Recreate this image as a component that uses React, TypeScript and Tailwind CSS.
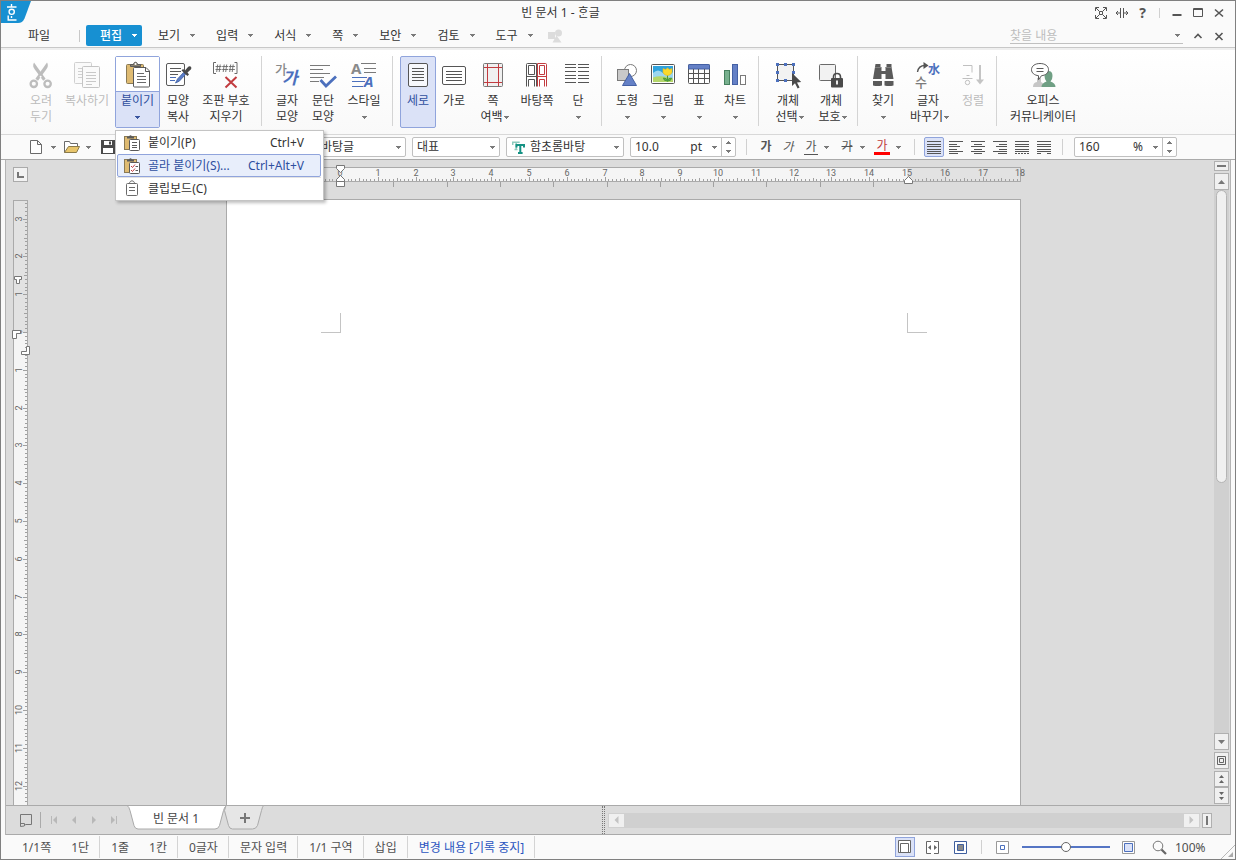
import React from "react";

const CM = 37.8;

function Caret({ className = "fill-[#7a7a7a]" }: { className?: string }) {
  return (
    <svg width="5" height="3" viewBox="0 0 5 3" className={`shrink-0 ${className}`} aria-hidden="true">
      <path d="M0 0h5v1H4v1H3v1H2V2H1V1H0z" shapeRendering="crispEdges" />
    </svg>
  );
}

function Icon({ children }: { children: React.ReactNode }) {
  return (
    <svg width="28" height="28" viewBox="0 0 28 28" fill="none" className="block shrink-0 overflow-visible" aria-hidden="true">
      {children}
    </svg>
  );
}

/* ---------- ribbon drawings ---------- */

const ScissorsIcon = (
  <Icon>
    <g fill="#bdbdbd">
      <path d="M7 1.500c-1.600 3-.6 5 .8 7l8.400 11.300 2.400-2z" />
      <path d="M20 1.500c1.600 3 .6 5-.8 7L11 19.800l-2.600-2z" />
    </g>
    <circle cx="6.800" cy="22.800" r="3.200" stroke="#bdbdbd" strokeWidth="2.300" />
    <circle cx="20.600" cy="22.800" r="3.200" stroke="#bdbdbd" strokeWidth="2.300" />
    <circle cx="13.600" cy="15.800" r="1" fill="#fff" />
  </Icon>
);

const CopyIcon = (
  <Icon>
    <rect x="1.500" y="1.500" width="17" height="21" rx="1" fill="#fafafa" stroke="#d0d0d0" />
    <path d="M5 7.500h6M5 10.500h4M5 13.500h4M5 16.500h4" stroke="#d0d0d0" />
    <rect x="9.500" y="5.500" width="17" height="21" rx="1" fill="#fafafa" stroke="#c4c4c4" />
    <path d="M13 11.500h10M13 14.500h10M13 17.500h10M13 20.500h10M13 23.500h6" stroke="#c8c8c8" />
  </Icon>
);

const PasteIcon = (
  <Icon>
    <rect x="2.500" y="3.500" width="17" height="19" rx="1" fill="#dfbb72" stroke="#8a7a55" />
    <path d="M6.500 5.500v-2h3c0-3 4-3 4 0h3v2z" fill="#8a8270" stroke="#5a5a5a" />
    <circle cx="11.500" cy="3" r="1" fill="#fff" />
    <path d="M9.500 7.500q0-1 1-1h11.500l3.500 3.500v15q0 1-1 1h-14q-1 0-1-1z" fill="#fff" stroke="#5a5a5a" />
    <path d="M21.500 7v3.500h3.500" stroke="#5a5a5a" />
    <path d="M13 12.500h7M13 15.500h9M13 18.500h9M13 21.500h9" stroke="#6a6a6a" />
  </Icon>
);

const ShapeCopyIcon = (
  <Icon>
    <rect x="2.500" y="2.500" width="18" height="22" rx="1.500" fill="#fff" stroke="#5a5a5a" />
    <path d="M6 7.500h11M6 10.500h11M6 13.500h8" stroke="#5a5a5a" />
    <path d="M6 16.500h6M6 19.500h5" stroke="#4a6db8" />
    <path d="M19.500 11.500l-6 6.500-2 4 3.800-1.800 6.200-6.700z" fill="#5a7cc8" stroke="#3f5f9f" strokeWidth=".8" />
    <path d="M17.500 9.500l1.500-1.500 2 1.500 3-3.500c2-2 4.500.5 2.800 2.500l-3.300 3 1.500 2-1.600 1.500z" fill="#4a4a4a" />
  </Icon>
);

const ClearCodeIcon = (
  <Icon>
    <path d="M4 1.500H1.500v11H4M22.500 1.500H25v11h-2.500" stroke="#6a6a6a" />
    <path d="M5.700 3.500l-1 7.500M8.200 3.500l-1 7.500M3.500 5.500h6M3.500 8.500h6M12.200 3.500l-1 7.500M14.700 3.500l-1 7.500M10.200 5.500h6M10.200 8.500h6M18.700 3.500l-1 7.500M21.200 3.500l-1 7.500M16.900 5.500h6M16.900 8.500h6" stroke="#6a6a6a" strokeWidth=".9" />
    <path d="M13.500 16l11 10.500M24.500 16l-11 10.500" stroke="#c23c40" strokeWidth="2" />
  </Icon>
);

const CharShapeIcon = (
  <Icon>
    <text x="2" y="13" fontSize="13" fontWeight="500" fill="#8a8a8a">가</text>
    <text x="9" y="23" fontSize="17" fontWeight="700" fontStyle="italic" fill="#4c70bd">가</text>
  </Icon>
);

const ParaShapeIcon = (
  <Icon>
    <path d="M1 4.500h20M1 8.500h13M1 12.500h20M1 16.500h14M1 20.500h9" stroke="#7a7a7a" />
    <path d="M11.500 19l5.500 6 10-9.500" stroke="#4c70bd" strokeWidth="2.800" />
  </Icon>
);

const StyleIcon = (
  <Icon>
    <text x="1" y="13" fontSize="15" fontWeight="700" fill="#8a8a8a">A</text>
    <path d="M11 2.500h15M14 7.500h12M14 11.500h12" stroke="#7a7a7a" />
    <path d="M2 16.500h15M2 20.500h13M2 25.500h11" stroke="#4c70bd" />
    <text x="14" y="26" fontSize="15" fontWeight="700" fontStyle="italic" fill="#4c70bd">A</text>
  </Icon>
);

const PortraitIcon = (
  <Icon>
    <rect x="4.500" y="2.500" width="19" height="23" rx="1.500" fill="#f7f8fc" stroke="#555" />
    <path d="M8 7.500h12M8 10.500h12M8 13.500h12M8 16.500h12M8 19.500h12" stroke="#555" />
  </Icon>
);

const LandscapeIcon = (
  <Icon>
    <rect x="2.500" y="5.500" width="23" height="18" rx="1.500" fill="#fff" stroke="#555" />
    <path d="M6 10.500h16M6 13.500h16M6 16.500h16M6 19.500h16" stroke="#555" />
  </Icon>
);

const MarginIcon = (
  <Icon>
    <rect x="4.500" y="2.500" width="19" height="23" rx="1" fill="#f0f0f0" stroke="#7a7a7a" />
    <path d="M8.500 3v22M19.500 3v22M5 6.500h18M5 21.500h18" stroke="#c23c40" />
  </Icon>
);

const MasterPageIcon = (
  <Icon>
    <g stroke="#555">
      <path d="M3.500 25.500v-22q0-1 1-1h9v23" fill="#fff" />
      <path d="M5.500 4.500h6v9h-6zM3.500 15.500h10M5.500 25.500v-7h6v7" />
    </g>
    <g stroke="#c23c40">
      <path d="M14.500 25.500v-23h8q1 0 1 1v22" fill="#fff" />
      <path d="M16.500 4.500h5v9h-5zM14.500 15.500h9M16.500 25.500v-7h5v7" />
    </g>
  </Icon>
);

const ColumnsIcon = (
  <Icon>
    <path d="M1 3.500h11M1 6.500h11M1 10.500h11M1 14.500h11M1 17.500h11M1 21.500h11M14 3.500h11M14 6.500h11M14 10.500h11M14 14.500h11M14 17.500h11M14 21.500h11" stroke="#555" />
  </Icon>
);

const ShapesIcon = (
  <Icon>
    <circle cx="17.500" cy="9.500" r="6" fill="#fff" stroke="#7a7a7a" />
    <rect x="4.500" y="8.500" width="11" height="11" fill="#c9c9c9" stroke="#7a7a7a" />
    <path d="M16.500 12.500l7 12h-14z" fill="#6480c6" stroke="#4460a4" />
  </Icon>
);

const PictureIcon = (
  <Icon>
    <rect x="2.500" y="3.500" width="23" height="19" rx="1" fill="#fff" stroke="#555" />
    <rect x="4" y="5" width="20" height="16" fill="#2fa3dd" />
    <path d="M4 12q5-5 10 0t10-1v10H4z" fill="#9bd6ef" />
    <path d="M4 16.500q8-3 20 1V21H4z" fill="#b4d66a" />
    <path d="M18.500 12v8.500M18.500 20q-4 0-4-3 3.500 0 4 3 .5-3 4-3 0 3-4 3" stroke="#4a9a3a" fill="#69b04b" />
    <path d="M14 7.500l2.500 1 2-1.500 2 1.500 2.500-1v4q-1.500 3-4.500 3t-4.500-3z" fill="#fbd92a" stroke="#e9b91c" strokeWidth=".6" />
  </Icon>
);

const TableIcon = (
  <Icon>
    <rect x="3.500" y="3.500" width="21" height="19" rx="1" fill="#fff" stroke="#555" />
    <path d="M3.500 8V4.500q0-1 1-1h19q1 0 1 1V8z" fill="#6480c6" stroke="#4460a4" />
    <path d="M4 12.500h20M4 17.500h20M8.500 8v14M13.500 8v14M19.500 8v14" stroke="#555" />
  </Icon>
);

const ChartIcon = (
  <Icon>
    <rect x="3.500" y="9.500" width="5" height="14" fill="#78b08e" stroke="#46805e" />
    <rect x="11.500" y="3.500" width="5" height="20" fill="#6480c6" stroke="#4460a4" />
    <rect x="19.500" y="14.500" width="5" height="9" fill="#fff" stroke="#7a7a7a" />
  </Icon>
);

const SelectObjectIcon = (
  <Icon>
    <rect x="3.500" y="3.500" width="16" height="16" fill="#f2f2f2" stroke="#555" />
    <path d="M2 2h3v3H2zM10 2h3v3h-3zM18 2h3v3h-3zM2 10h3v3H2zM18 10h3v3h-3zM2 18h3v3H2zM10 18h3v3h-3z" fill="#4c70bd" />
    <path d="M18 12v13l3-2.800 2.600 5.200 2-1-2.600-5 4.200-.4z" fill="#4a4a4a" />
  </Icon>
);

const ProtectObjectIcon = (
  <Icon>
    <rect x="2.500" y="3.500" width="16" height="16" rx="1" fill="#f2f2f2" stroke="#6a6a6a" />
    <path d="M16.500 18v-2q0-3.500 3.500-3.500t3.500 3.500v2" stroke="#4a4a4a" strokeWidth="1.600" />
    <rect x="14" y="17" width="12" height="9.500" rx="1" fill="#4a4a4a" />
    <path d="M20 19.500v4" stroke="#fff" strokeWidth="1.800" />
  </Icon>
);

const BinocularsIcon = (
  <Icon>
    <g fill="#5a5a5a">
      <path d="M6.500 3h5v3h1v4h4V6h1V3h5v3l2 12h-8v-5h-4v5H4l2-12z" />
      <path d="M4 20h9v4.500q-4.500 1-9 0zM15.500 20h9v4.500q-4.500 1-9 0z" />
    </g>
    <path d="M6 6.500h6M16.500 6.500h6" stroke="#8a8a8a" strokeWidth=".8" />
  </Icon>
);

const ReplaceCharIcon = (
  <Icon>
    <text x="1" y="26" fontSize="13" fontWeight="500" fill="#7a7a7a">수</text>
    <text x="14" y="13" fontSize="12" fontWeight="700" fill="#4c70bd">水</text>
    <path d="M3.500 11q1-6.500 7.500-6.500" stroke="#555" strokeWidth="1.400" />
    <path d="M9.500 1l5 3.500-5 3.500z" fill="#555" />
  </Icon>
);

const SortIcon = (
  <Icon>
    <path d="M4 4.500h9v7M7.500 14.500h3M3.500 17.500h10" stroke="#c0c0c0" />
    <circle cx="8.500" cy="21.500" r="2.200" stroke="#c0c0c0" />
    <path d="M21 4v17" stroke="#c4c4c4" strokeWidth="2" />
    <path d="M17 18.500h8l-4 5z" fill="#c4c4c4" />
  </Icon>
);

const CommunicatorIcon = (
  <Icon>
    <path d="M4 26q0-4.500 4-5v-4h4v4q3 1 3 5z" fill="#c6c6c6" />
    <path d="M12.500 26q0-4 5-5.500-2-2-2-5.500 0-5 4-5t4 5q0 3.500-2 5.500 5 1.500 5 5.500z" fill="#6f9f84" />
    <path d="M11 2.500c5 0 8.500 2.500 8.500 6.200 0 3.300-3 5.600-7 6l-3 4v-4c-4-.4-7-2.700-7-6 0-3.700 3.500-6.200 8.500-6.200z" fill="#fff" stroke="#5a5a5a" />
    <path d="M7.500 7.500h7M7.500 10.500h7" stroke="#5a5a5a" />
  </Icon>
);

/* ---------- ribbon ---------- */

type RibbonProps = {
  icon: React.ReactNode;
  lines: string[];
  width: string;
  caret?: "below" | "inline";
  disabled?: boolean;
  active?: boolean;
};

function RibbonButton({ icon, lines, width, caret, disabled, active }: RibbonProps) {
  return (
    <button
      type="button"
      disabled={disabled}
      className={`flex h-[72px] shrink-0 flex-col items-center whitespace-nowrap rounded-xs border pt-1 leading-4 ${width} ${
        active ? "border-[#90a4dc] bg-[#dbe2f7] text-[#2f4f9f]" : "border-transparent"
      } ${disabled ? "text-[#bcbcbc]" : ""}`}
    >
      {icon}
      <span className="mt-1">{lines[0]}</span>
      {lines[1] && (
        <span className={`flex items-center gap-px ${caret === "inline" ? "pl-[3px]" : ""}`}>
          {lines[1]}
          {caret === "inline" && <Caret />}
        </span>
      )}
      {caret === "below" && (
        <span className="flex h-4 items-center">
          <Caret />
        </span>
      )}
    </button>
  );
}

function RibbonDivider() {
  return <div className="ml-[5px] mr-[7px] h-[70px] w-px shrink-0 bg-[#d4d4d4]" />;
}

function MiniPaste({ kind }: { kind: "paste" | "special" | "board" }) {
  return (
    <svg width="18" height="18" viewBox="0 0 18 18" fill="none" aria-hidden="true">
      {kind === "board" ? (
        <g stroke="#6a6a6a">
          <rect x="3.500" y="3.500" width="11" height="12" rx="1" fill="#fff" />
          <path d="M6.500 3.500c0-3.500 5-3.500 5 0" />
          <path d="M6 7.500h6M6 10.500h6" />
        </g>
      ) : (
        <g>
          <rect x="1.500" y="2.500" width="12" height="13" fill="#dfbb72" stroke="#8a7a55" />
          <path d="M4 4.500V2.500h2q1.500-2.500 3 0h2v2z" fill="#5a5a5a" />
          <rect x="6.500" y="5.500" width="10" height="11" rx="1" fill="#fff" stroke="#5a5a5a" />
          {kind === "paste" ? (
            <path d="M9 8.500h5M9 11.500h5M9 13.500h5" stroke="#5a5a5a" />
          ) : (
            <g>
              <path d="M8 9l1.500 1.500L12 7.500M8 13l1.500 1.500 2.500-3" stroke="#c23c40" />
              <path d="M12.500 9.500h2.500M12.500 13.500h2.500" stroke="#5a5a5a" />
            </g>
          )}
        </g>
      )}
    </svg>
  );
}

function PasteMenu() {
  return (
    <div
      role="menu"
      className="absolute -left-px top-[73px] z-10 w-[209px] border border-[#c4c4c4] bg-white p-px pr-0.5 text-[#333] shadow-[2px_2px_3px_rgba(0,0,0,0.25)]"
    >
      <button type="button" role="menuitem" className="flex h-[22px] w-full items-center border border-transparent pl-[5px] pr-4">
        <MiniPaste kind="paste" />
        <span className="ml-[7px] flex-1 text-left">붙이기(P)</span>
        <span>Ctrl+V</span>
      </button>
      <button
        type="button"
        role="menuitem"
        className="flex h-[23px] w-full items-center rounded-xs border border-[#90a4dc] bg-[#e8eefb] pl-[5px] pr-4 text-[#2f4f9f]"
      >
        <MiniPaste kind="special" />
        <span className="ml-[7px] flex-1 text-left">골라 붙이기(S)...</span>
        <span>Ctrl+Alt+V</span>
      </button>
      <div className="h-px bg-[#e4e4e4]" />
      <button type="button" role="menuitem" className="flex h-[21px] w-full items-center border border-transparent pl-[5px] pr-4">
        <MiniPaste kind="board" />
        <span className="ml-[7px] flex-1 text-left">클립보드(C)</span>
      </button>
    </div>
  );
}

function Ribbon() {
  return (
    <div className="flex h-[85px] items-start border-b border-[#d8d8d8] bg-gradient-to-b from-white to-[#f9f9f9] pl-[22px] pt-[6px]">
      <RibbonButton icon={ScissorsIcon} lines={["오려", "두기"]} width="w-9" disabled />
      <RibbonButton icon={CopyIcon} lines={["복사하기"]} width="w-[56px]" disabled />
      <div className="relative flex h-[72px] w-[45px] shrink-0 flex-col rounded-xs border border-[#90a4dc] text-[#2f4f9f]">
        <button type="button" aria-label="붙이기" className="flex h-[34px] justify-center bg-white pl-px pt-1">
          {PasteIcon}
        </button>
        <button type="button" className="flex flex-1 flex-col items-center border-t border-[#90a4dc] bg-[#dbe2f7] pt-px leading-4">
          <span>붙이기</span>
          <span className="flex h-4 items-center">
            <Caret className="fill-[#3a559f]" />
          </span>
        </button>
        <PasteMenu />
      </div>
      <RibbonButton icon={ShapeCopyIcon} lines={["모양", "복사"]} width="w-9" />
      <RibbonButton icon={ClearCodeIcon} lines={["조판 부호", "지우기"]} width="w-[60px]" />
      <RibbonDivider />
      <RibbonButton icon={CharShapeIcon} lines={["글자", "모양"]} width="w-9" />
      <RibbonButton icon={ParaShapeIcon} lines={["문단", "모양"]} width="w-9" />
      <RibbonButton icon={StyleIcon} lines={["스타일"]} width="w-[46px]" caret="below" />
      <RibbonDivider />
      <RibbonButton icon={PortraitIcon} lines={["세로"]} width="w-9" active />
      <RibbonButton icon={LandscapeIcon} lines={["가로"]} width="w-9" />
      <RibbonButton icon={MarginIcon} lines={["쪽", "여백"]} width="w-[42px]" caret="inline" />
      <RibbonButton icon={MasterPageIcon} lines={["바탕쪽"]} width="w-[46px]" />
      <RibbonButton icon={ColumnsIcon} lines={["단"]} width="w-9" caret="below" />
      <RibbonDivider />
      <RibbonButton icon={ShapesIcon} lines={["도형"]} width="w-9" caret="below" />
      <RibbonButton icon={PictureIcon} lines={["그림"]} width="w-9" caret="below" />
      <RibbonButton icon={TableIcon} lines={["표"]} width="w-9" caret="below" />
      <RibbonButton icon={ChartIcon} lines={["차트"]} width="w-9" caret="below" />
      <RibbonDivider />
      <RibbonButton icon={SelectObjectIcon} lines={["개체", "선택"]} width="w-11" caret="inline" />
      <RibbonButton icon={ProtectObjectIcon} lines={["개체", "보호"]} width="w-[42px]" caret="inline" />
      <RibbonDivider />
      <RibbonButton icon={BinocularsIcon} lines={["찾기"]} width="w-9" caret="below" />
      <RibbonButton icon={ReplaceCharIcon} lines={["글자", "바꾸기"]} width="w-[54px]" caret="inline" />
      <RibbonButton icon={SortIcon} lines={["정렬"]} width="w-9" disabled />
      <RibbonDivider />
      <RibbonButton icon={CommunicatorIcon} lines={["오피스", "커뮤니케이터"]} width="w-[78px]" />
    </div>
  );
}

/* ---------- title and menu ---------- */

function ToolGlyph({ label, children }: { label: string; children: React.ReactNode }) {
  return (
    <button type="button" aria-label={label} className="flex h-5 w-[21px] items-center justify-center">
      <svg width="12" height="12" viewBox="0 0 12 12" fill="none" stroke="#555" className="overflow-visible">
        {children}
      </svg>
    </button>
  );
}

function Header() {
  const menus = ["보기", "입력", "서식", "쪽", "보안", "검토", "도구"];
  return (
    <header>
      <div className="flex h-[23px] items-center pr-[6px]">
        <svg width="30" height="23" viewBox="0 0 30 23" className="block shrink-0" aria-hidden="true">
          <path d="M0 0h30l-6.500 17.500Q21.500 22 17 22H0z" fill="#1790d2" />
          <g stroke="#fff" fill="none" strokeWidth="1.400">
            <path d="M10.500 3v3M6 6h9.500M10.500 15v2M7.200 14.500V19H15.500" />
            <circle cx="10.700" cy="10.800" r="2.600" />
          </g>
        </svg>
        <h1 className="flex-1 text-center leading-5">빈 문서 1 - {"\u1112\u119E\u11AB"}글</h1>
        <ToolGlyph label="전체 화면">
          <path d="M.5 4V.5H4M8 .500h3.500V4M11.500 8v3.500H8M4 11.500H.5V8M1 1l3.500 3.500M11 1L7.500 4.500M11 11L7.500 7.500M1 11l3.500-3.500M4.500 4.500h3v3h-3z" />
        </ToolGlyph>
        <ToolGlyph label="창 나누기">
          <path d="M4.500 1v10M7.500 1v10M0 6h4M8 6h4M2 4L0 6l2 2M10 4l2 2-2 2" />
        </ToolGlyph>
        <button type="button" className="w-[21px] text-center text-sm font-bold leading-5 text-[#555]">
          ?
        </button>
        <div className="mx-[6px] h-[10px] w-px bg-[#d0d0d0]" />
        <ToolGlyph label="최소화">
          <path d="M1.500 8h9" strokeWidth="2" />
        </ToolGlyph>
        <ToolGlyph label="최대화">
          <path d="M1.500 1.500h9v8h-9zM1.500 2.500h9" />
        </ToolGlyph>
        <ToolGlyph label="닫기">
          <path d="M2 2.500l8 7M10 2.500l-8 7" strokeWidth="1.600" />
        </ToolGlyph>
      </div>
      <div className="flex h-6 items-center border-b border-[#c8c8c8] pr-[6px]">
        <button type="button" className="w-[78px] pl-[27px] text-left">
          파일
        </button>
        <div className="mr-[6px] h-3 w-px bg-[#c8c8c8]" />
        <button
          type="button"
          className="mr-1 flex h-[21px] w-[56px] items-center gap-[10px] rounded-xs bg-[#1790d2] pl-[14px] font-medium text-white"
        >
          편집
          <Caret className="fill-white" />
        </button>
        {menus.map((m) => (
          <button key={m} type="button" className="flex items-center gap-[10px] pl-3 pr-[9px]">
            {m}
            <Caret />
          </button>
        ))}
        <svg width="16" height="14" viewBox="0 0 16 14" className="ml-[6px]" fill="#dcdcdc" aria-hidden="true">
          <path d="M0 3h7v7H0zM8.500 6.500l5 7h-9z" />
          <circle cx="10.500" cy="4" r="3.500" />
        </svg>
        <div className="flex-1" />
        <label className="mr-1 flex h-[17px] w-[173px] items-center border-b border-[#c0c0c0] pr-[3px]">
          <input
            type="text"
            aria-label="찾을 내용"
            placeholder="찾을 내용"
            className="min-w-0 flex-1 bg-transparent pt-px leading-4 outline-none placeholder:text-[#bdbdbd]"
          />
          <Caret />
        </label>
        <ToolGlyph label="메뉴 접기">
          <path d="M2.500 8L6 4.500 9.500 8" strokeWidth="1.600" />
        </ToolGlyph>
        <ToolGlyph label="문서 닫기">
          <path d="M2.500 3l7 7M9.500 3l-7 7" strokeWidth="1.600" />
        </ToolGlyph>
      </div>
      <div className="h-[2px] bg-[#efefef]" />
    </header>
  );
}

/* ---------- formatting bar ---------- */

function Combo({ label, value, width, icon }: { label: string; value: string; width: string; icon?: React.ReactNode }) {
  return (
    <div className={`mr-[6px] flex h-5 shrink-0 items-center rounded-xs border border-[#c0c0c0] bg-white pr-1 ${width}`}>
      {icon}
      <select aria-label={label} className="min-w-0 flex-1 appearance-none bg-transparent pl-[4px] leading-4 outline-none">
        <option>{value}</option>
      </select>
      <Caret />
    </div>
  );
}

function NumberBox({ label, value, unit, width }: { label: string; value: string; unit: string; width: string }) {
  return (
    <div className={`flex h-5 shrink-0 items-center rounded-xs border border-[#c0c0c0] bg-white ${width}`}>
      <input aria-label={label} defaultValue={value} className="w-8 min-w-0 flex-1 bg-transparent pl-1 leading-4 outline-none" />
      <span className="mr-[10px]">{unit}</span>
      <Caret />
      <div className="ml-1 flex h-full w-[14px] flex-col border-l border-[#c0c0c0]">
        <button type="button" aria-label={`${label} 늘리기`} className="flex flex-1 items-center justify-center">
          <Caret className="rotate-180 fill-[#7a7a7a]" />
        </button>
        <button type="button" aria-label={`${label} 줄이기`} className="flex flex-1 items-center justify-center">
          <Caret />
        </button>
      </div>
    </div>
  );
}

function BarDivider({ className }: { className: string }) {
  return <div className={`h-4 w-px shrink-0 bg-[#d0d0d0] ${className}`} />;
}

const alignments = [
  { label: "양쪽 정렬", d: "M0 .5h14M0 3.500h14M0 5.500h14M0 8.500h14M0 10.500h14M0 12.500h14", active: true },
  { label: "왼쪽 정렬", d: "M0 .5h14M0 3.500h8M0 5.500h11M0 8.500h8M0 10.500h14M0 12.500h9" },
  { label: "가운데 정렬", d: "M0 .5h14M3 3.500h8M0 5.500h14M3 8.500h8M0 10.500h14M3 12.500h8" },
  { label: "오른쪽 정렬", d: "M0 .5h14M6 3.500h8M3 5.500h11M6 8.500h8M0 10.500h14M5 12.500h9" },
  { label: "배분 정렬", d: "M0 .5h14M0 3.500h14M0 5.500h14M0 8.500h14M0 12.500h2M3 12.500h2M6 12.500h2M9 12.500h2M12 12.500h2M0 10.500h14" },
  { label: "나눔 정렬", d: "M0 .5h14M0 3.500h14M0 5.500h14M0 8.500h14M0 10.500h14M0 12.500h4M10 12.500h4" },
];

function FormatBar() {
  return (
    <div className="flex h-[25px] items-center border-b border-[#aaa] pl-7">
      <button type="button" aria-label="새 문서" className="flex w-[27px] items-center justify-between">
        <svg width="14" height="16" viewBox="0 0 14 16" fill="#fff" stroke="#6a6a6a" aria-hidden="true">
          <path d="M1.500 1.500h7l4 4v9h-11zM8.500 1.500v4h4" />
        </svg>
        <Caret />
      </button>
      <button type="button" aria-label="열기" className="ml-2 flex w-[27px] items-center justify-between">
        <svg width="18" height="14" viewBox="0 0 18 14" aria-hidden="true" stroke="#6a6a6a">
          <path d="M.5 12.500v-11h5l1 2h7v3" fill="#fff" />
          <path d="M.5 12.500l4-6h11l-3 6z" fill="#e8c56b" stroke="#8a7a4a" />
        </svg>
        <Caret />
      </button>
      <button type="button" aria-label="저장" className="ml-[10px] w-[14px]">
        <svg width="14" height="14" viewBox="0 0 14 14" aria-hidden="true">
          <path d="M0 0h14v14H0z" fill="#4a4a4a" />
          <path d="M3 1h8v4H3zM2 8h10v5H2z" fill="#fff" />
          <path d="M8 1.500h2v3H8z" fill="#4a4a4a" />
        </svg>
      </button>
      <div className="w-[201px] shrink-0" />
      <Combo label="스타일" value="바탕글" width="w-[90px]" />
      <Combo label="언어" value="대표" width="w-[88px]" />
      <Combo
        label="글꼴"
        value="함초롬바탕"
        width="w-[118px]"
        icon={
          <svg width="14" height="13" viewBox="0 0 14 13" className="ml-[5px] shrink-0" fill="none" aria-hidden="true">
            <path d="M.7 4V1.200h7M4.200 1.200V8.500M2.500 8.500h3" stroke="#8ccbbd" strokeWidth="1.500" />
            <path d="M4.500 6.500V4H12v2.500M8.300 4v8M6 12h4.600" stroke="#159284" strokeWidth="2" />
          </svg>
        }
      />
      <NumberBox label="글자 크기" value="10.0" unit="pt" width="w-[106px]" />
      <BarDivider className="ml-[10px] mr-2" />
      <button type="button" className="w-[22px] text-center font-bold text-[#555]">가</button>
      <button type="button" className="w-[22px] text-center italic text-[#555]">가</button>
      <button type="button" className="flex w-[36px] items-center gap-[6px] pl-[5px] text-[#555]">
        <span className="w-[14px] border-b border-[#555] text-center leading-[14px]">가</span>
        <Caret />
      </button>
      <button type="button" className="flex w-[36px] items-center gap-[6px] pl-[5px] text-[#555]">
        <span className="w-[14px] text-center leading-4 line-through">가</span>
        <Caret />
      </button>
      <button type="button" className="flex w-[36px] items-center gap-[6px] pl-[3px] text-[#c0393b]">
        <span className="w-4 border-b-[3px] border-[#f00] text-center leading-[13px]">가</span>
        <Caret />
      </button>
      <BarDivider className="ml-[7px] mr-[9px]" />
      {alignments.map((a) => (
        <button
          key={a.label}
          type="button"
          aria-label={a.label}
          className={`mr-0.5 flex h-5 w-5 items-center justify-center rounded-xs border ${
            a.active ? "border-[#90a4dc] bg-[#dbe2f7]" : "border-transparent"
          }`}
        >
          <svg width="14" height="12" viewBox="0 0 14 12" stroke="#555" className="shrink-0 overflow-visible" aria-hidden="true">
            <path d={a.d} />
          </svg>
        </button>
      ))}
      <BarDivider className="ml-[6px] mr-[11px]" />
      <NumberBox label="확대 비율" value="160" unit="%" width="w-[103px]" />
    </div>
  );
}

/* ---------- rulers ---------- */

function tickSize(i: number) {
  return i % 10 === 0 ? 4 : i % 5 === 0 ? 3 : 2;
}

function HorizontalRuler() {
  const zero = 114;
  const ticks: string[] = [];
  for (let i = -30; i <= 180; i++) {
    const x = Math.round(zero + (i * CM) / 10) + 0.5;
    if (x < 1 || x > 794) continue;
    ticks.push(`M${x} ${14 - tickSize(i)}V14`);
  }
  const tabs: string[] = [];
  for (let i = 1; i <= 10; i++) tabs.push(`M${Math.round(zero + i * 53.3) + 0.5} 15v5`);
  const nums = Array.from({ length: 19 }, (_, i) => i);
  return (
    <svg width="795" height="32" viewBox="0 0 795 32" fill="none" className="block overflow-visible" aria-hidden="true">
      <rect x=".5" y=".5" width="794" height="14" fill="#e2e2e2" stroke="#aaa" />
      <rect x="114" y="1" width="567" height="13" fill="#f5f5f5" />
      <path d={ticks.join("")} stroke="#a0a0a0" />
      <path d={tabs.join("")} stroke="#a0a0a0" />
      <g className="font-[Roboto,sans-serif]" fontSize="9" fill="#666" textAnchor="middle">
        {nums.map((n) => (
          <text key={n} x={Math.round(zero + n * CM)} y="9">
            {n}
          </text>
        ))}
      </g>
      <g fill="#fff" stroke="#777">
        <path d="M110.500-1.500h8v3l-4 4-4-4zM110.500 14.500v-2l4-4 4 4v2zM110.500 14.500h8v5h-8z" />
        <path d="M678.500 16.500v-3l4-4 4 4v3z" />
      </g>
    </svg>
  );
}

function VerticalRuler() {
  const zero = 132;
  const ticks: string[] = [];
  for (let i = -35; i <= 262; i++) {
    const y = Math.round(zero + (i * CM) / 10) + 0.5;
    if (y < 2) continue;
    ticks.push(`M${14 - tickSize(i)} ${y}H14`);
  }
  const nums = Array.from({ length: 16 }, (_, i) => i - 3);
  return (
    <svg width="15" height="1124" viewBox="0 0 15 1124" fill="none" className="block shrink-0 overflow-visible" aria-hidden="true">
      <rect x=".5" y=".5" width="14" height="1123" fill="#e2e2e2" stroke="#aaa" />
      <rect x="1" y="132" width="13" height="934" fill="#f5f5f5" />
      <path d={ticks.join("")} stroke="#a0a0a0" />
      <g className="font-[Roboto,sans-serif]" fontSize="9" fill="#666" textAnchor="middle">
        {nums.map((n) => (
          <text key={n} transform={`translate(9 ${Math.round(zero + n * CM)}) rotate(-90)`}>
            {Math.abs(n)}
          </text>
        ))}
      </g>
      <g fill="#fff" stroke="#777">
        <path d="M1.500 76.500h7v3h-2v4h-3v-4h-2z" />
        <path d="M-.5 130.500h8v3h-4v5h-4z" />
        <path d="M13.500 146.500h3v8h-8v-3h5z" />
      </g>
    </svg>
  );
}

/* ---------- workspace ---------- */

function ScrollButton({ label, height, children }: { label: string; height: string; children: React.ReactNode }) {
  return (
    <button type="button" aria-label={label} className={`flex w-[15px] shrink-0 items-center justify-center border border-[#b0b0b0] bg-[#f0f0f0] ${height}`}>
      {children}
    </button>
  );
}

function ScrollTriangle({ d }: { d: string }) {
  return (
    <svg width="7" height="4" viewBox="0 0 7 4" fill="#777" className="shrink-0" aria-hidden="true">
      <path d={d} />
    </svg>
  );
}

function Workspace() {
  return (
    <div className="flex min-h-0 flex-1 overflow-hidden">
      <div className="flex w-[27px] shrink-0 flex-col overflow-hidden pl-[7px] pt-[7px]">
        <button type="button" aria-label="탭 종류" className="mb-[18px] flex h-[15px] w-[15px] shrink-0 items-center justify-center border border-[#aaa] bg-[#f2f2f2]">
          <svg width="7" height="7" viewBox="0 0 7 7" fill="#777" aria-hidden="true">
            <path d="M0 1h2v4h5v2H0z" />
          </svg>
        </button>
        <VerticalRuler />
      </div>
      <div className="flex min-w-0 flex-1 flex-col items-center overflow-hidden pt-[7px]">
        <HorizontalRuler />
        <main className="flex h-[1123px] w-[795px] shrink-0 items-start justify-between border border-[#aaa] bg-white pl-[94px] pr-[93px] pt-[113px]">
          <div className="h-5 w-5 border-b border-r border-[#c4c4c4]" />
          <div className="h-5 w-5 border-b border-l border-[#c4c4c4]" />
        </main>
      </div>
      <div className="flex w-4 shrink-0 flex-col pb-px pt-px">
        <ScrollButton label="화면 나누기" height="h-[10px]">
          <span className="h-[2px] w-[9px] bg-[#777]" />
        </ScrollButton>
        <div className="h-[2px] shrink-0" />
        <ScrollButton label="위로" height="h-[17px]">
          <ScrollTriangle d="M0 4L3.500 0 7 4z" />
        </ScrollButton>
        <div className="flex w-[15px] flex-1 flex-col items-center bg-[#d0d0d0]">
          <div className="h-[54%] w-[11px] rounded-full border border-[#b4b4b4] bg-[#f0f0f0]" />
        </div>
        <ScrollButton label="아래로" height="h-[17px]">
          <ScrollTriangle d="M0 0l3.500 4L7 0z" />
        </ScrollButton>
        <div className="h-[2px] shrink-0" />
        <ScrollButton label="찾아가기" height="h-[17px]">
          <svg width="9" height="9" viewBox="0 0 9 9" fill="none" stroke="#666" className="shrink-0" aria-hidden="true">
            <path d="M.5.500h8v8h-8zM2.500 2.500h4v4h-4z" />
          </svg>
        </ScrollButton>
        <div className="h-[2px] shrink-0" />
        <ScrollButton label="이전 쪽" height="h-4">
          <svg width="5" height="8" viewBox="0 0 5 8" fill="#666" aria-hidden="true">
            <path d="M0 3l2.500-3L5 3zM0 8l2.500-3L5 8z" />
          </svg>
        </ScrollButton>
        <ScrollButton label="다음 쪽" height="h-[17px]">
          <svg width="5" height="8" viewBox="0 0 5 8" fill="#666" aria-hidden="true">
            <path d="M0 0l2.500 3L5 0zM0 5l2.500 3L5 5z" />
          </svg>
        </ScrollButton>
      </div>
    </div>
  );
}

function TabBar() {
  const nav = [
    { label: "첫 탭", d: "M1 0h1v8H1zM7 0v8L3 4z" },
    { label: "이전 탭", d: "M6 0v8L2 4z" },
    { label: "다음 탭", d: "M2 0v8l4-4z" },
    { label: "마지막 탭", d: "M1 0v8l4-4zM6 0h1v8H6z" },
  ];
  return (
    <div className="flex h-[30px] shrink-0 border-y border-[#aaa]">
      <div className="flex flex-[89] items-start">
        <div className="flex h-7 items-center pl-[14px]">
          <button type="button" aria-label="탭 목록" className="w-[11px]">
            <svg width="12" height="13" viewBox="0 0 12 13" fill="none" stroke="#777" aria-hidden="true">
              <path d="M.5.500h11v10H5.500q0 2-5 2zM.5 9.500h4v2" />
            </svg>
          </button>
          <div className="ml-[9px] mr-[3px] h-4 w-px bg-[#aaa]" />
          {nav.map((n) => (
            <button key={n.label} type="button" aria-label={n.label} className="flex w-5 justify-center">
              <svg width="8" height="8" viewBox="0 0 8 8" fill="#b8b8b8" aria-hidden="true">
                <path d={n.d} />
              </svg>
            </button>
          ))}
        </div>
        <button type="button" className="ml-[3px] grid h-6 w-[100px] place-items-center">
          <svg width="100" height="24" viewBox="0 0 100 24" className="col-start-1 row-start-1" aria-hidden="true">
            <path d="M0-.5q2 1 3 5l4 15q1 3.500 4 3.500h77q3.500 0 4.500-3.500l4-15q1-4 3-5z" fill="#fff" stroke="#aaa" />
          </svg>
          <span className="col-start-1 row-start-1 pr-0.5 pt-px text-[#444]">빈 문서 1</span>
        </button>
        <button type="button" aria-label="새 탭" className="h-6 w-[38px]">
          <svg width="38" height="24" viewBox="0 0 38 24" className="overflow-visible" aria-hidden="true">
            <path d="M-2.500 4.500l4 15q1 3.500 4 3.500h20q3.500 0 5-3.500l4-15q1-4 2-5H-1z" fill="#e6e6e6" stroke="#aaa" />
            <path d="M18 7v10M13 12h10" stroke="#777" strokeWidth="2" />
          </svg>
        </button>
      </div>
      <div className="flex flex-[91] items-center pr-[18px]">
        <div className="mr-[3px] h-full w-[3px] border-x border-dotted border-[#777]" />
        <button type="button" aria-label="왼쪽으로" className="flex h-[15px] w-[17px] items-center justify-center border border-[#d0d0d0] bg-[#f0f0f0]">
          <svg width="5" height="8" viewBox="0 0 5 8" fill="#c4c4c4" aria-hidden="true">
            <path d="M4.500 0v8L.5 4z" />
          </svg>
        </button>
        <div className="h-[15px] flex-1 bg-[#d0d0d0]" />
        <button type="button" aria-label="오른쪽으로" className="flex h-[15px] w-[17px] items-center justify-center border border-[#d0d0d0] bg-[#f0f0f0]">
          <svg width="5" height="8" viewBox="0 0 5 8" fill="#c4c4c4" aria-hidden="true">
            <path d="M.5 0v8l4-4z" />
          </svg>
        </button>
        <button type="button" aria-label="가로 나누기" className="ml-[2px] flex h-[15px] w-[10px] items-center justify-center border border-[#b0b0b0] bg-[#f0f0f0]">
          <span className="h-[9px] w-[2px] bg-[#777]" />
        </button>
      </div>
    </div>
  );
}

function StatusCell({ children, first }: { children: React.ReactNode; first?: boolean }) {
  return (
    <div className={`flex h-[22px] items-center gap-5 whitespace-nowrap border-r border-[#d4d4d4] pr-[10px] pt-px ${first ? "pl-[21px]" : "pl-[11px]"}`}>
      {children}
    </div>
  );
}

function StatusBar() {
  return (
    <footer className="flex h-6 shrink-0 items-center text-[#505050]">
      <StatusCell first>
        <span>1/1쪽</span>
        <span>1단</span>
      </StatusCell>
      <StatusCell>
        <span>1줄</span>
        <span>1칸</span>
      </StatusCell>
      <StatusCell>0글자</StatusCell>
      <StatusCell>문자 입력</StatusCell>
      <StatusCell>1/1 구역</StatusCell>
      <StatusCell>삽입</StatusCell>
      <StatusCell>
        <button type="button" className="text-[#2a55c0]">
          변경 내용 [기록 중지]
        </button>
      </StatusCell>
      <div className="flex-1" />
      <button type="button" aria-label="쪽 윤곽" className="flex h-5 w-5 items-center justify-center border border-[#90a4dc] bg-[#dbe2f7]">
        <svg width="14" height="14" viewBox="0 0 14 14" className="shrink-0" fill="#fff" stroke="#666" aria-hidden="true">
          <path d="M.5.500h12v12H.5zM2.500 12.500v-9h8v9" />
        </svg>
      </button>
      <button type="button" aria-label="폭 맞춤" className="ml-[11px]">
        <svg width="13" height="13" viewBox="0 0 13 13" fill="#fff" aria-hidden="true">
          <path d="M.5.500h12v12H.5z" stroke="#666" />
          <path d="M5 4v5L2 6.500zM8 4v5l3-2.500z" fill="#666" />
          <path d="M6.500 0v2M6.500 11v2" stroke="#fff" strokeWidth="3" />
        </svg>
      </button>
      <button type="button" aria-label="쪽 맞춤" className="ml-[15px]">
        <svg width="13" height="13" viewBox="0 0 13 13" aria-hidden="true">
          <path d="M.5.500h12v12H.5z" fill="#fff" stroke="#3f5f9f" />
          <path d="M3.500 3.500h6v6h-6z" fill="#8a8a8a" stroke="#3f5f9f" />
        </svg>
      </button>
      <div className="mx-[14px] h-[14px] w-px bg-[#d0d0d0]" />
      <button type="button" aria-label="축소">
        <svg width="13" height="13" viewBox="0 0 13 13" fill="#fff" aria-hidden="true">
          <path d="M.5.500h12v12H.5z" stroke="#999" />
          <path d="M4.500 4.500h4v4h-4z" stroke="#4c70bd" />
        </svg>
      </button>
      <input
        type="range"
        aria-label="확대 축소"
        defaultValue={50}
        className="ml-[13px] h-[2px] w-[88px] appearance-none bg-[#5575c4] [&::-webkit-slider-thumb]:h-[10px] [&::-webkit-slider-thumb]:w-[10px] [&::-webkit-slider-thumb]:appearance-none [&::-webkit-slider-thumb]:rounded-full [&::-webkit-slider-thumb]:border [&::-webkit-slider-thumb]:border-[#666] [&::-webkit-slider-thumb]:bg-white"
      />
      <button type="button" aria-label="확대" className="ml-[12px]">
        <svg width="13" height="13" viewBox="0 0 13 13" fill="#fff" aria-hidden="true">
          <path d="M.5.500h12v12H.5z" stroke="#999" />
          <path d="M2.500 2.500h8v8h-8z" fill="#dbe2f7" stroke="#4c70bd" />
        </svg>
      </button>
      <svg width="15" height="15" viewBox="0 0 15 15" className="ml-[17px]" fill="none" aria-hidden="true">
        <circle cx="6" cy="6" r="4.800" stroke="#777" />
        <path d="M9.500 9.500l4.500 4.500" stroke="#666" strokeWidth="2.200" />
      </svg>
      <span className="ml-2 w-[46px] pt-px">100%</span>
      <svg width="14" height="14" viewBox="0 0 14 14" className="self-end" aria-hidden="true">
        <path d="M0 14L14 0" stroke="#b8b8b8" />
        <path d="M12 7v5H7z" fill="#aaa" />
      </svg>
    </footer>
  );
}

export default function App() {
  return (
    <div className="flex h-screen flex-col overflow-hidden border border-[#808080] bg-[#fafafa] font-['Noto_Sans','Noto_Sans_CJK_KR',sans-serif] text-xs text-[#333]">
      <Header />
      <Ribbon />
      <FormatBar />
      <div className="mx-1 flex min-h-0 flex-1 flex-col border-x border-[#b4b4b4] bg-[#dcdcdc]">
        <Workspace />
        <TabBar />
      </div>
      <StatusBar />
    </div>
  );
}
